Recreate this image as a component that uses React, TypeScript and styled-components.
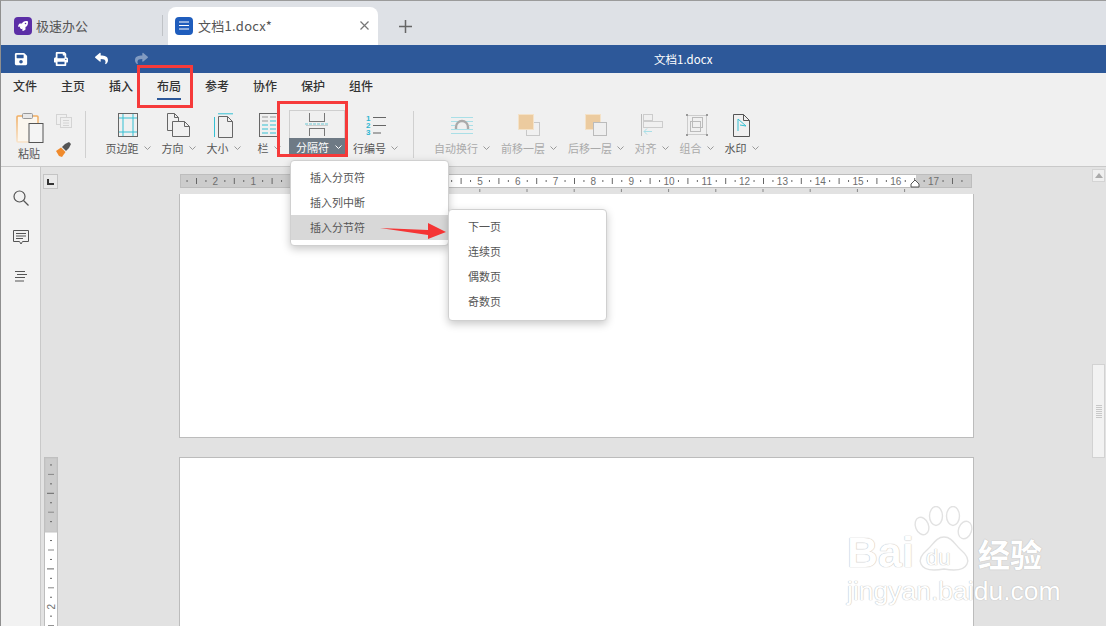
import React from 'react';
import styled, { createGlobalStyle } from 'styled-components';
import { FaSave, FaPrint, FaReply, FaShare, FaRocket } from 'react-icons/fa';

const CJK = `"Noto Sans CJK SC", "Liberation Sans", sans-serif`;
const CM = 37.8;
const ORIGIN = 111; // ruler x of the 0 mark

const GlobalStyle = createGlobalStyle`
  html, body { margin: 0; padding: 0; background: #e2e2e2; overflow: hidden; }
  * { box-sizing: border-box; }
  body { font-family: ${CJK}; }
`;

const Chevron = ({ light }: { light?: boolean }) => (
  <ChevronSvg width="7" height="4" viewBox="0 0 7 4">
    <polyline points="0.5,0.5 3.5,3.5 6.5,0.5" fill="none" stroke={light ? '#fff' : '#999'} strokeWidth="1" />
  </ChevronSvg>
);

const MarginIcon = () => (
  <svg width="20" height="24" viewBox="0 0 20 24" fill="none">
    <rect x="0.5" y="0.5" width="19" height="23" stroke="#666" />
    <path d="M5 1v22M15 1v22M1 5h18M1 19h18" stroke="#35c0d3" />
  </svg>
);

const OrientIcon = () => (
  <svg width="25" height="25" viewBox="0 0 25 25" fill="none" stroke="#666">
    <path d="M1.5.5h7l4 4v4M1.5.5v17h5" />
    <path d="M8.5.5v4h4" />
    <path d="M6.5 8.5h12l5 5v10h-17z" fill="#f0f0f0" />
    <path d="M18.5 8.5v5h5" />
  </svg>
);

const SizeIcon = () => (
  <svg width="21" height="25" viewBox="0 0 21 25" fill="none">
    <path d="M5.5 3.500h9l5 5v16h-14z" stroke="#666" />
    <path d="M14.5 3.500v5h5" stroke="#666" />
    <path d="M5 .8h15M1.500 4v20" stroke="#35c0d3" />
  </svg>
);

const ColumnIcon = () => (
  <svg width="20" height="24" viewBox="0 0 20 24" fill="none">
    <rect x="0.5" y="0.5" width="19" height="23" stroke="#666" />
    <path d="M3 4h6M11 4h6M3 8h6" stroke="#999" />
    <path d="M11 8h6M3 12h6M11 12h6M3 16h6M11 16h6M3 20h6M11 20h6" stroke="#35c0d3" />
  </svg>
);

const BreakIcon = () => (
  <svg width="24" height="23" viewBox="0 0 24 23" fill="none">
    <path d="M4.500 0v8M19.500 0v8M4 8.500h16M4 15.500h16M4.500 15v8M19.500 15v8" stroke="#777" />
    <path d="M0 11h24" stroke="#6cc8d4" strokeDasharray="3 1" />
    <path d="M1 12.500h22" stroke="#ccc" />
  </svg>
);

const LineNumberIcon = () => (
  <svg width="20" height="22" viewBox="0 0 20 22" fill="none">
    <path d="M7 3.500h13M7 11.500h13" stroke="#666" />
    <path d="M7 19h8" stroke="#888" strokeWidth="1.4" />
    <NumberGlyph x="0" y="7">1</NumberGlyph>
    <NumberGlyph x="0" y="14">2</NumberGlyph>
    <NumberGlyph x="0" y="21">3</NumberGlyph>
  </svg>
);

const WrapIcon = () => (
  <svg width="22" height="17" viewBox="0 0 22 17" fill="none">
    <path d="M0 .5h22M0 4.500h22M0 8.500h4M18 8.500h4M0 12.500h22M0 16.500h22" stroke="#a9dfe7" />
    <path d="M5 12V10a6 6 0 0 1 12 0v2" stroke="#aaa" strokeWidth="2.4" />
  </svg>
);

const ForwardIcon = () => (
  <svg width="22" height="22" viewBox="0 0 22 22" fill="none">
    <rect x="8.5" y="8.5" width="13" height="13" stroke="#c8c8c8" />
    <rect x="0.5" y="0.5" width="15" height="15" fill="#eccb9f" stroke="#f4e2c8" />
  </svg>
);

const BackwardIcon = () => (
  <svg width="22" height="22" viewBox="0 0 22 22" fill="none">
    <rect x="0.5" y="0.5" width="15" height="15" fill="#eccb9f" stroke="#f4e2c8" />
    <rect x="8.5" y="8.5" width="13" height="13" fill="#efefef" stroke="#bbb" />
  </svg>
);

const AlignIcon = () => (
  <svg width="22" height="22" viewBox="0 0 22 22" fill="none">
    <path d="M.5 0v22" stroke="#bbb" />
    <rect x="2.5" y="0.5" width="9" height="6" stroke="#ccc" />
    <rect x="2.5" y="7.5" width="19" height="6" stroke="#ccc" />
    <path d="M11 17.500H3M6 14.500l-3 3 3 3" stroke="#a9dfe7" />
  </svg>
);

const GroupIcon = () => (
  <svg width="22" height="22" viewBox="0 0 22 22" fill="none">
    <path d="M2 1.500h18M2 20.500h18M1.500 2v18M20.500 2v18" stroke="#ccc" />
    <rect x="6.5" y="3.5" width="10" height="10" stroke="#bbb" />
    <rect x="4.5" y="7.5" width="10" height="10" stroke="#bbb" />
    <path d="M0 0h2v2H0zM20 0h2v2h-2zM0 20h2v2H0zM20 20h2v2h-2z" fill="#999" />
  </svg>
);

const StampIcon = () => (
  <svg width="17" height="23" viewBox="0 0 17 23" fill="none">
    <path d="M.5.5h10l6 6v16H.5z" stroke="#555" />
    <path d="M10.500.5v6h6" stroke="#555" />
    <path d="M5 17V5l8 7-6-1" stroke="#35c0d3" />
  </svg>
);

const PasteIcon = () => (
  <svg width="30" height="30" viewBox="0 0 30 30" fill="none">
    <defs>
      <linearGradient id="pasteFade" x1="0" y1="0" x2="0" y2="1">
        <stop offset="0" stopColor="#f0ad62" />
        <stop offset="1" stopColor="#f8e2c8" />
      </linearGradient>
    </defs>
    <rect x="3" y="3" width="21" height="26" rx="1" fill="#fbf6ee" stroke="url(#pasteFade)" strokeWidth="1.6" />
    <rect x="8.5" y="0.5" width="10" height="5" rx="1" fill="#e8e8e8" stroke="#999" />
    <rect x="15" y="10.5" width="14" height="19" fill="#f4f4f4" stroke="#555" />
  </svg>
);

const CopyIcon = () => (
  <svg width="16" height="14" viewBox="0 0 16 14" fill="none" stroke="#d4d4d4">
    <rect x="0.5" y="0.5" width="10" height="10" />
    <rect x="4.5" y="3.5" width="11" height="10" fill="#efefef" />
    <path d="M7 6.500h6M7 9h6M7 11.500h6" />
  </svg>
);

const BrushIcon = () => (
  <svg width="15" height="15" viewBox="0 0 15 15">
    <path d="M0 9l5-3.500 4.500 4.500L6 15 3 14z" fill="#f08a2c" />
    <path d="M6 5l3-3 4-2 2 2-2 4-3 3z" fill="#555" />
  </svg>
);

const SearchIcon = () => (
  <svg width="16" height="16" viewBox="0 0 16 16" fill="none" stroke="#555">
    <circle cx="6.500" cy="6.500" r="5.500" strokeWidth="1.2" />
    <path d="M10.500 10.500l5 5" strokeWidth="1.2" />
  </svg>
);

const CommentIcon = () => (
  <svg width="16" height="15" viewBox="0 0 16 15" fill="none" stroke="#555">
    <path d="M.5.5h15v11H9.500L8 14l-1.500-2.500H.5z" />
    <path d="M3 3.500h10M3 6h10M3 8.500h7" />
  </svg>
);

const OutlineIcon = () => (
  <svg width="14" height="11" viewBox="0 0 14 11" fill="none" stroke="#555">
    <path d="M1 .5h10M3 3.500h10M1 6.500h10M1 10h9" />
  </svg>
);

const PawLogo = () => (
  <svg width="62" height="68" viewBox="0 0 62 68" fill="#fff" stroke="#e2e2e2" strokeWidth="1.4">
    <ellipse cx="9" cy="20" rx="6.500" ry="9" transform="rotate(-22 9 20)" />
    <ellipse cx="23" cy="10" rx="6.500" ry="9.500" />
    <ellipse cx="40" cy="10" rx="6.500" ry="9.500" />
    <ellipse cx="52" cy="24" rx="6.500" ry="9" transform="rotate(20 52 24)" />
    <path d="M31 31c8 0 11 8 17 13 6 5 8 10 6 14-3 7-12 7-23 5-11 2-20 2-23-5-2-4 0-9 6-14 6-5 9-13 17-13z" />
  </svg>
);

const HorizontalRuler = () => {
  const marks: React.ReactNode[] = [];
  for (let i = -12; i <= 72; i++) {
    const x = ORIGIN + (i * CM) / 4;
    if (x < 4 || x > 788) continue;
    if (x > 108 && x < 270) continue; // hidden by the open menu
    if (i % 4 === 0) {
      const n = Math.abs(i / 4);
      marks.push(<RulerNumber key={i} x={x} y={11} textAnchor="middle">{n}</RulerNumber>);
    } else if (i % 2 === 0) {
      marks.push(<line key={i} x1={x} x2={x} y1={4} y2={10} stroke="#666" />);
    } else {
      marks.push(<line key={i} x1={x} x2={x} y1={6} y2={8} stroke="#666" />);
    }
  }
  const tabs = [];
  for (let k = 1; k <= 13; k++) {
    const x = ORIGIN + k * 47.2;
    tabs.push(<line key={k} x1={x} x2={x} y1={15} y2={18} stroke="#888" />);
  }
  return (
    <RulerSvg width="792" height="20" viewBox="0 0 792 20">
      <rect x="0.5" y="0.5" width="791" height="13" fill="#cccccc" stroke="#bdbdbd" />
      <rect x={ORIGIN} y="1" width="625" height="12" fill="#fff" />
      {marks}
      {tabs}
      <path d="M731 13v-3l4-4 4 4v3z" fill="#fff" stroke="#555" />
    </RulerSvg>
  );
};

const VerticalRuler = () => {
  const marks: React.ReactNode[] = [];
  for (let i = 1; i <= 18; i++) {
    const y = i * 9.45 - 1.5;
    if (i === 8) continue;
    if (i === 16) {
      marks.push(<RulerNumber key={i} x={7} y={y + 4} textAnchor="middle" transform={`rotate(-90 7 ${y})`}>2</RulerNumber>);
    } else if (i % 4 === 0) {
      marks.push(<line key={i} x1={3} x2={10} y1={y} y2={y} stroke="#666" />);
    } else if (i % 2 === 0) {
      marks.push(<line key={i} x1={4} x2={10} y1={y} y2={y} stroke="#888" />);
    } else {
      marks.push(<line key={i} x1={6} x2={8} y1={y} y2={y} stroke="#666" />);
    }
  }
  return (
    <RulerSvg width="14" height="170" viewBox="0 0 14 170">
      <rect x="0.5" y="0.5" width="13" height="175" fill="#fff" stroke="#bdbdbd" />
      <rect x="1" y="1" width="12" height="74" fill="#cccccc" stroke="#c4c4c4" />
      {marks}
    </RulerSvg>
  );
};

type ToolProps = { icon: React.ReactNode; label: string; width: number; gap?: number; disabled?: boolean };

const Tool = ({ icon, label, width, gap, disabled }: ToolProps) => (
  <ToolWrap $width={width} $gap={gap ?? 0}>
    <IconSlot>{icon}</IconSlot>
    <ToolLabel $disabled={disabled}>
      {label}
      <Chevron />
    </ToolLabel>
  </ToolWrap>
);

export default function App() {
  return (
    <>
      <GlobalStyle />
      <Screen>
        <TabBar>
          <AppTab>
            <AppLogo><FaRocket size={10} color="#fff" /></AppLogo>
            <AppName>极速办公</AppName>
          </AppTab>
          <TabDivider />
          <DocTab>
            <DocBadge>
              <svg width="10" height="9" viewBox="0 0 10 9" stroke="#fff" strokeWidth="1.2">
                <path d="M0 1h10M0 4.500h10M0 8h10" />
              </svg>
            </DocBadge>
            <DocName>文档1.docx*</DocName>
            <CloseGlyph width="9" height="9" viewBox="0 0 9 9" stroke="#777" strokeWidth="1.2">
              <path d="M.5.5l8 8M8.500.5l-8 8" />
            </CloseGlyph>
          </DocTab>
          <NewTab width="13" height="13" viewBox="0 0 13 13" stroke="#666" strokeWidth="1.5">
            <path d="M6.500 0v13M0 6.500h13" />
          </NewTab>
        </TabBar>

        <TitleBar>
          <QuickActions>
            <QuickButton><FaSave size={14} /></QuickButton>
            <QuickButton><FaPrint size={14} /></QuickButton>
            <QuickButton><FaReply size={13} /></QuickButton>
            <QuickButton $faded><FaShare size={13} /></QuickButton>
          </QuickActions>
          <DocTitle>文档1.docx</DocTitle>
        </TitleBar>

        <MenuBar>
          {['文件', '主页', '插入', '布局', '参考', '协作', '保护', '组件'].map((m) => (
            <MenuItem key={m} $active={m === '布局'}>{m}</MenuItem>
          ))}
        </MenuBar>

        <Toolbar>
          <PasteTool>
            <PasteIcon />
            <PasteLabel>粘贴</PasteLabel>
          </PasteTool>
          <ClipColumn>
            <CopyIcon />
            <BrushIcon />
          </ClipColumn>
          <ToolDivider $left={13} />
          <Tool icon={<MarginIcon />} label="页边距" width={44} gap={20} />
          <Tool icon={<OrientIcon />} label="方向" width={33} gap={12} />
          <Tool icon={<SizeIcon />} label="大小" width={33} gap={12} />
          <Tool icon={<ColumnIcon />} label="栏" width={22} gap={18} />
          <BreakButton>
            <BreakIconSlot><BreakIcon /></BreakIconSlot>
            <BreakLabel>分隔符<Chevron light /></BreakLabel>
          </BreakButton>
          <Tool icon={<LineNumberIcon />} label="行编号" width={45} gap={8} />
          <ToolDivider $left={15} />
          <Tool icon={<WrapIcon />} label="自动换行" width={56} gap={20} disabled />
          <Tool icon={<ForwardIcon />} label="前移一层" width={56} gap={11} disabled />
          <Tool icon={<BackwardIcon />} label="后移一层" width={56} gap={11} disabled />
          <Tool icon={<AlignIcon />} label="对齐" width={33} gap={11} disabled />
          <Tool icon={<GroupIcon />} label="组合" width={33} gap={12} disabled />
          <Tool icon={<StampIcon />} label="水印" width={33} gap={12} />
        </Toolbar>

        <Body>
          <SideRail>
            <RailButton><SearchIcon /></RailButton>
            <RailButton><CommentIcon /></RailButton>
            <RailButton><OutlineIcon /></RailButton>
          </SideRail>
          <Workspace>
            <DocArea>
              <RulerRow>
                <TabStopBox>
                  <svg width="7" height="6" viewBox="0 0 7 6"><path d="M0 0h2v4h5v2H0z" fill="#333" /></svg>
                </TabStopBox>
                <HorizontalRuler />
              </RulerRow>
              <PageRow><Page $height={244} /></PageRow>
              <PageRow $gap={19}>
                <VerticalRuler />
                <Page $height={180} $lead={121} />
              </PageRow>
            </DocArea>
            <ScrollTrack>
              <ScrollUp>
                <svg width="8" height="5" viewBox="0 0 8 5"><path d="M4 0l4 5H0z" fill="#aaa" /></svg>
              </ScrollUp>
              <ScrollThumb>
                {[0, 1, 2, 3, 4, 5, 6].map((g) => <ThumbGrip key={g} />)}
              </ScrollThumb>
            </ScrollTrack>
          </Workspace>
        </Body>

        <RedFrame $x={137} $y={65} $w={56} $h={43} />
        <RedFrame $x={277} $y={101} $w={71} $h={56} />

        <Dropdown $x={290} $y={160} $w={159} $h={86}>
          <DropItem>插入分页符</DropItem>
          <DropItem>插入列中断</DropItem>
          <DropItem $active>插入分节符</DropItem>
        </Dropdown>
        <Dropdown $x={448} $y={209} $w={159} $h={112}>
          <DropItem>下一页</DropItem>
          <DropItem>连续页</DropItem>
          <DropItem>偶数页</DropItem>
          <DropItem>奇数页</DropItem>
        </Dropdown>

        <ArrowMark width="66" height="16" viewBox="0 0 66 16">
          <path d="M0 5l48 2V0l18 9-18 7v-4z" fill="#f53535" />
        </ArrowMark>

        <Watermark>
          <WatermarkTop>
            <BaiText>Bai</BaiText>
            <PawWrap>
              <PawLogo />
              <DuText>du</DuText>
            </PawWrap>
            <JingText>经验</JingText>
          </WatermarkTop>
          <SiteText>jingyan.baidu.com</SiteText>
        </Watermark>
      </Screen>
    </>
  );
}

const Screen = styled.div`
  position: relative;
  width: 1106px;
  height: 626px;
  overflow: hidden;
  display: flex;
  flex-direction: column;
  border-top: 1px solid #9b9b9b;
  border-left: 1px solid #8f8f8f;
  background: #e2e2e2;
`;

const TabBar = styled.div`
  display: flex;
  align-items: flex-end;
  height: 44px;
  flex: none;
  background: #dee1e6;
`;

const AppTab = styled.div`
  display: flex;
  align-items: center;
  width: 160px;
  height: 38px;
  padding: 0 0 1px 13px;
  gap: 4px;
`;

const AppLogo = styled.div`
  width: 18px;
  height: 18px;
  border-radius: 4px;
  background: #5b2ea6;
  display: flex;
  align-items: center;
  justify-content: center;
`;

const AppName = styled.span`
  font-size: 13px;
  color: #555;
`;

const TabDivider = styled.div`
  width: 1px;
  height: 21px;
  margin: 0 5px 9px 1px;
  background: #bfc2c6;
`;

const DocTab = styled.div`
  display: flex;
  align-items: center;
  width: 210px;
  height: 38px;
  padding: 0 8px 1px 7px;
  background: #fff;
  border-radius: 8px 8px 0 0;
`;

const DocBadge = styled.div`
  width: 18px;
  height: 18px;
  border-radius: 4px;
  background: #1f5dbd;
  display: flex;
  align-items: center;
  justify-content: center;
`;

const DocName = styled.span`
  margin-left: 5px;
  flex: 1;
  font-size: 13px;
  letter-spacing: 0.25px;
  color: #555;
`;

const CloseGlyph = styled.svg`
  margin-right: 1px;
`;

const NewTab = styled.svg`
  margin: 0 0 12px 21px;
`;

const TitleBar = styled.div`
  display: flex;
  align-items: center;
  height: 28px;
  flex: none;
  padding-bottom: 1px;
  background: #2d5899;
`;

const QuickActions = styled.div`
  display: flex;
  width: 653px;
`;

const QuickButton = styled.div<{ $faded?: boolean }>`
  width: 40px;
  display: flex;
  justify-content: center;
  color: #fff;
  opacity: ${({ $faded }) => ($faded ? 0.4 : 1)};
`;

const DocTitle = styled.span`
  font-size: 11.500px;
  color: #fff;
`;

const MenuBar = styled.div`
  display: flex;
  height: 30px;
  flex: none;
  background: #f0f0f0;
`;

const MenuItem = styled.div<{ $active?: boolean }>`
  position: relative;
  width: 48px;
  padding-top: 4px;
  text-align: center;
  font-size: 12px;
  font-weight: 500;
  color: #333;

  &::after {
    content: '';
    display: ${({ $active }) => ($active ? 'block' : 'none')};
    position: absolute;
    left: 12px;
    right: 12px;
    bottom: 3px;
    height: 2px;
    background: #2d5899;
  }
`;

const Toolbar = styled.div`
  display: flex;
  align-items: flex-start;
  height: 64px;
  flex: none;
  padding-top: 5px;
  background: #f0f0f0;
  border-bottom: 1px solid #c9c9c9;
`;

const PasteTool = styled.div`
  display: flex;
  flex-direction: column;
  align-items: center;
  width: 32px;
  margin: 5px 0 0 12px;
`;

const PasteLabel = styled.span`
  margin-top: 2px;
  font-size: 11px;
  line-height: 16px;
  color: #555;
`;

const ClipColumn = styled.div`
  display: flex;
  flex-direction: column;
  gap: 14px;
  margin: 6px 0 0 11px;
`;

const ToolDivider = styled.div<{ $left: number }>`
  width: 1px;
  height: 47px;
  margin: 3px 0 0 ${({ $left }) => $left}px;
  background: #d0d0d0;
`;

const ToolWrap = styled.div<{ $width: number; $gap: number }>`
  display: flex;
  flex-direction: column;
  align-items: center;
  width: ${({ $width }) => $width}px;
  margin-left: ${({ $gap }) => $gap}px;
`;

const IconSlot = styled.div`
  display: flex;
  align-items: center;
  justify-content: center;
  height: 34px;
`;

const ToolLabel = styled.div<{ $disabled?: boolean }>`
  display: flex;
  align-items: center;
  gap: 4px;
  height: 14px;
  margin-top: -1px;
  white-space: nowrap;
  font-size: 11px;
  color: ${({ $disabled }) => ($disabled ? '#aaa' : '#555')};
`;

const ChevronSvg = styled.svg`
  flex: none;
  margin-left: 1px;
`;

const BreakButton = styled.div`
  display: flex;
  flex-direction: column;
  width: 56px;
  height: 45px;
  margin: 2px 0 0 9px;
  border: 1px solid #cfcfcf;
  border-bottom: none;
`;

const BreakIconSlot = styled.div`
  display: flex;
  align-items: center;
  justify-content: center;
  height: 27px;
`;

const BreakLabel = styled.div`
  display: flex;
  align-items: center;
  gap: 5px;
  flex: 1;
  margin: 0 -1px;
  padding-left: 7px;
  background: #6e7a85;
  font-size: 11px;
  color: #fff;
`;

const NumberGlyph = styled.text`
  font-family: "Liberation Sans", sans-serif;
  font-size: 8px;
  font-weight: 700;
  fill: #2fb6d0;
`;

const Body = styled.div`
  display: flex;
  flex: 1;
  min-height: 0;
`;

const SideRail = styled.div`
  display: flex;
  flex-direction: column;
  align-items: center;
  width: 40px;
  flex: none;
  padding-top: 22px;
  gap: 21px;
  background: #f2f2f2;
  border-right: 1px solid #c9c9c9;
`;

const RailButton = styled.div`
  display: flex;
  align-items: center;
  justify-content: center;
  height: 18px;
`;

const Workspace = styled.div`
  display: flex;
  flex: 1;
  min-width: 0;
  background: #e2e2e2;
`;

const DocArea = styled.div`
  flex: 1;
  min-width: 0;
  padding-top: 7px;
`;

const RulerRow = styled.div`
  display: flex;
  align-items: flex-start;
  padding-left: 2px;
`;

const RulerSvg = styled.svg`
  display: block;
  flex: none;
`;

const RulerNumber = styled.text`
  font-family: "Liberation Sans", sans-serif;
  font-size: 10px;
  fill: #6e6e6e;
`;

const TabStopBox = styled.div`
  display: flex;
  align-items: center;
  justify-content: center;
  width: 15px;
  height: 15px;
  margin-right: 122px;
  border: 1px solid #c4c4c4;
  background: #e9e9e9;
`;

const PageRow = styled.div<{ $gap?: number }>`
  display: flex;
  align-items: flex-start;
  margin-top: ${({ $gap }) => $gap ?? 0}px;
  padding-left: 3px;
`;

const Page = styled.div<{ $height: number; $lead?: number }>`
  width: 795px;
  height: ${({ $height }) => $height}px;
  margin-left: ${({ $lead }) => $lead ?? 135}px;
  background: #fff;
  border: 1px solid #bcbcbc;
  border-top: ${({ $lead }) => ($lead ? '1px solid #bcbcbc' : 'none')};
`;

const ScrollTrack = styled.div`
  display: flex;
  flex-direction: column;
  align-items: flex-end;
  width: 30px;
  flex: none;
  padding: 2px 1px 0 0;
`;

const ScrollUp = styled.div`
  display: flex;
  align-items: center;
  justify-content: center;
  width: 13px;
  height: 13px;
  border: 1px solid #d4d4d4;
  background: #efefef;
`;

const ScrollThumb = styled.div`
  display: flex;
  flex-direction: column;
  align-items: center;
  justify-content: center;
  gap: 1px;
  width: 13px;
  height: 94px;
  margin: 182px 0 0 0;
  border: 1px solid #d2d2d2;
  background: #f2f2f2;
`;

const ThumbGrip = styled.div`
  width: 6px;
  height: 1px;
  background: #c8c8c8;
`;

const RedFrame = styled.div<{ $x: number; $y: number; $w: number; $h: number }>`
  position: absolute;
  left: ${({ $x }) => $x - 1}px;
  top: ${({ $y }) => $y - 1}px;
  width: ${({ $w }) => $w}px;
  height: ${({ $h }) => $h}px;
  border: 3px solid #f63a3a;
`;

const Dropdown = styled.div<{ $x: number; $y: number; $w: number; $h: number }>`
  position: absolute;
  left: ${({ $x }) => $x - 1}px;
  top: ${({ $y }) => $y - 1}px;
  width: ${({ $w }) => $w}px;
  height: ${({ $h }) => $h}px;
  padding-top: 4px;
  background: #fff;
  border: 1px solid #d0d0d0;
  border-radius: 4px;
  box-shadow: 0 3px 8px rgba(0, 0, 0, 0.22);
`;

const DropItem = styled.div<{ $active?: boolean }>`
  height: 25px;
  padding-left: 19px;
  font-size: 11px;
  line-height: 25px;
  color: #555;
  background: ${({ $active }) => ($active ? '#d8d8d8' : 'transparent')};
`;

const ArrowMark = styled.svg`
  position: absolute;
  left: 379px;
  top: 222px;
`;

const Watermark = styled.div`
  position: absolute;
  left: 846px;
  top: 505px;
  width: 200px;
  pointer-events: none;
  font-family: "Liberation Sans", sans-serif;
  color: #fff;
  text-shadow: 0 0 1px #bdbdbd, 0 0 1px #bdbdbd;
`;

const WatermarkTop = styled.div`
  display: flex;
  align-items: flex-end;
`;

const BaiText = styled.span`
  width: 66px;
  font-size: 43px;
  line-height: 44px;
  font-weight: 700;
  margin-bottom: 0;
`;

const PawWrap = styled.div`
  position: relative;
  width: 65px;
  height: 68px;
`;

const DuText = styled.span`
  position: absolute;
  left: 13px;
  top: 40px;
  font-size: 22px;
  line-height: 24px;
  color: #fff;
`;

const JingText = styled.span`
  font-family: ${CJK};
  font-size: 32px;
  line-height: 36px;
  font-weight: 700;
  margin-bottom: 3px;
`;

const SiteText = styled.div`
  margin-top: 3px;
  font-size: 26.500px;
  line-height: 28px;
  white-space: nowrap;
`;
